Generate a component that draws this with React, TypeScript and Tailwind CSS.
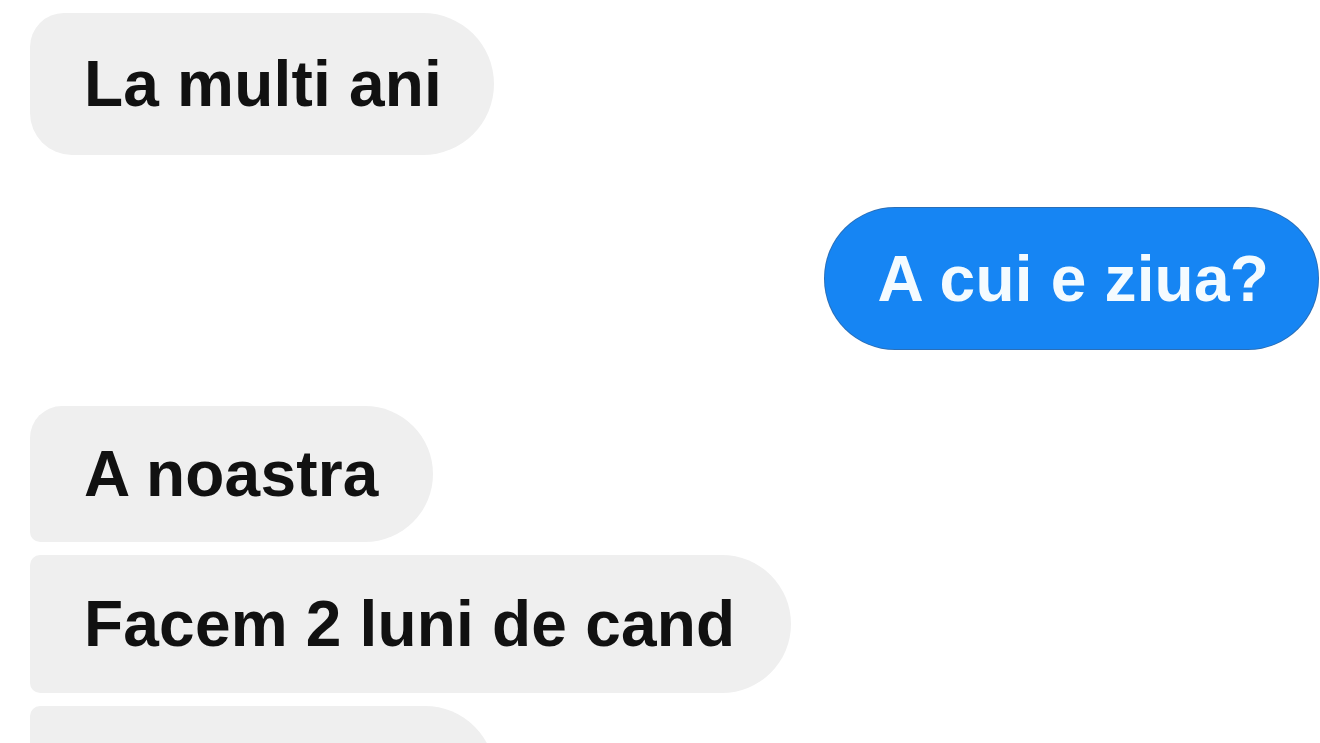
const Bubble = ({
  text,
  mine = false,
  className = "",
}: {
  text?: string;
  mine?: boolean;
  className?: string;
}) => {
  return (
    <div
      className={`flex items-center ${
        mine
          ? "bg-[#1685f3] text-[#f4fbff] ring-1 ring-[#2a6fb8]"
          : "bg-[#efefef] text-[#111111]"
      } ${className}`}
    >
      {text && (
        <span className="text-[64px] font-bold leading-none whitespace-nowrap tracking-[0.2px]">
          {text}
        </span>
      )}
    </div>
  );
};

export default function App() {
  return (
    <main
      className="w-[1320px] h-[743px] overflow-hidden bg-white"
      style={{ fontFamily: '"Liberation Sans", Arial, sans-serif' }}
    >
      <div className="flex flex-col pl-[30px] pr-[2px] pt-[13px]">
        <div className="flex">
          <Bubble
            text="La multi ani"
            className="h-[142px] pl-[54px] pr-[52px] rounded-tl-[34px] rounded-bl-[42px] rounded-r-[71px]"
          />
        </div>

        <div className="flex justify-end mt-[53px]">
          <Bubble
            text="A cui e ziua?"
            mine
            className="h-[141px] pl-[53px] pr-[49px] rounded-[70px]"
          />
        </div>

        <div className="flex flex-col items-start mt-[57px] gap-[13px]">
          <Bubble
            text="A noastra"
            className="h-[136px] pl-[54px] pr-[54px] rounded-tl-[32px] rounded-bl-[10px] rounded-r-[68px]"
          />
          <Bubble
            text="Facem 2 luni de cand"
            className="h-[138px] pl-[54px] pr-[56px] rounded-l-[10px] rounded-r-[69px]"
          />
          <Bubble className="h-[140px] w-[465px] rounded-l-[10px] rounded-r-[70px]" />
        </div>
      </div>
    </main>
  );
}
